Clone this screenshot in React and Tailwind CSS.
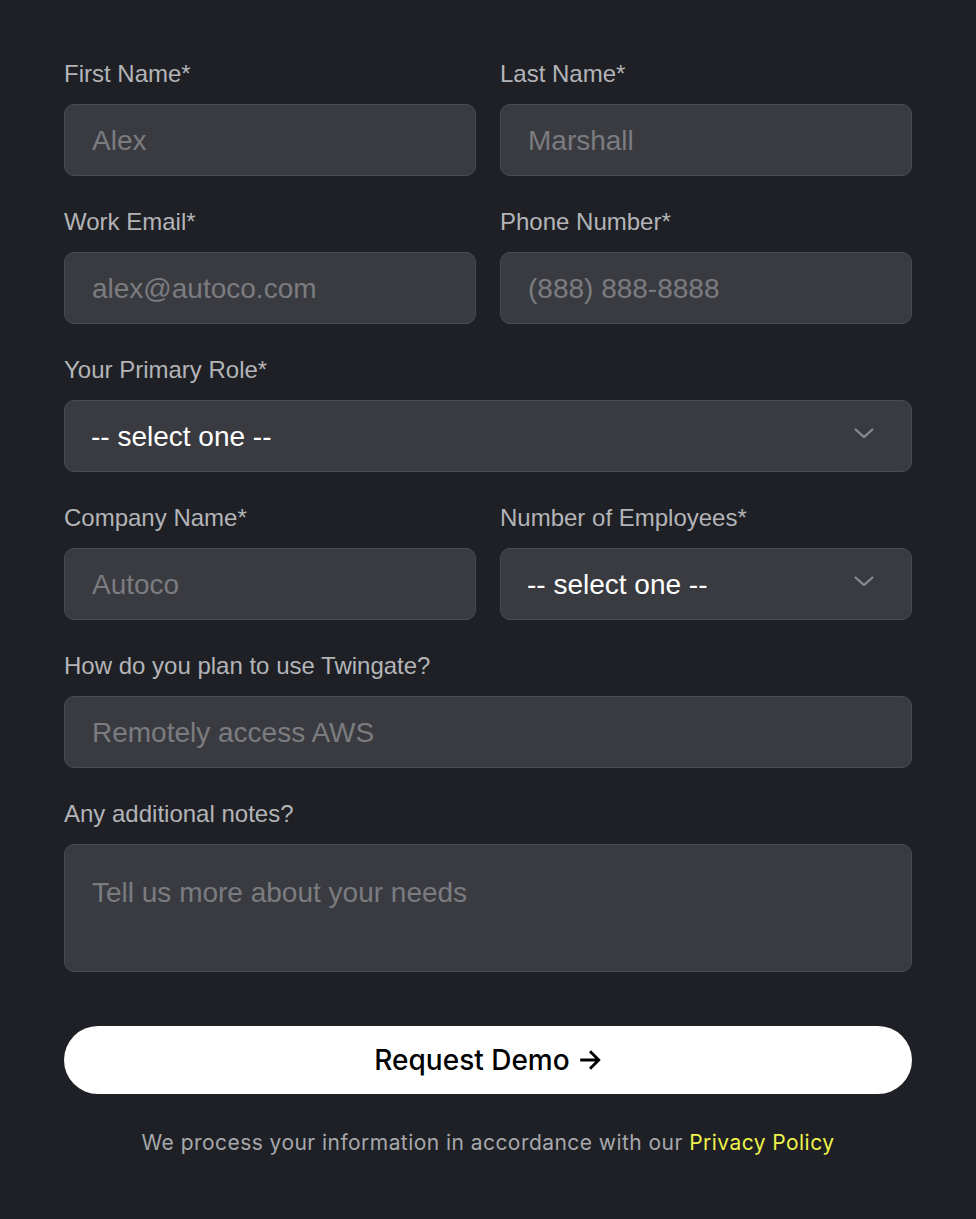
import React from "react";

const Label = ({ children }) => (
  <label className="block text-[24px] leading-[28px] text-[#b3b4b8] mb-4">{children}</label>
);

const Field = ({ label, placeholder }) => (
  <div className="flex flex-col">
    <Label>{label}</Label>
    <input
      placeholder={placeholder}
      className="h-[72px] w-full rounded-[10px] border border-[#4a4b51] bg-[#3a3b40] px-[27px] pt-[2px] text-[28px] text-white placeholder:text-[#7b7c80] outline-none"
    />
  </div>
);

const Select = ({ label }) => (
  <div className="flex flex-col">
    <Label>{label}</Label>
    <div className="relative">
      <select className="h-[72px] w-full appearance-none rounded-[10px] border border-[#4a4b51] bg-[#3a3b40] px-[26px] pt-[2px] text-[28px] text-white outline-none">
        <option>-- select one --</option>
      </select>
      <svg
        className="pointer-events-none absolute right-[37px] top-[26px]"
        width="22"
        height="14"
        viewBox="0 0 22 14"
        fill="none"
      >
        <path d="M2 3l9 8 9-8" stroke="#8a8b90" strokeWidth="2.2" />
      </svg>
    </div>
  </div>
);

const App = () => {
  return (
    <div className="min-h-[1219px] bg-[#1e2025] px-16 pt-[60px]" style={{ fontFamily: '"Liberation Sans", Arial, sans-serif' }}>
      <div className="flex flex-col gap-8">
        <div className="grid grid-cols-2 gap-6">
          <Field label="First Name*" placeholder="Alex" />
          <Field label="Last Name*" placeholder="Marshall" />
        </div>
        <div className="grid grid-cols-2 gap-6">
          <Field label="Work Email*" placeholder="alex@autoco.com" />
          <Field label="Phone Number*" placeholder="(888) 888-8888" />
        </div>
        <Select label="Your Primary Role*" />
        <div className="grid grid-cols-2 gap-6">
          <Field label="Company Name*" placeholder="Autoco" />
          <Select label="Number of Employees*" />
        </div>
        <Field label="How do you plan to use Twingate?" placeholder="Remotely access AWS" />
        <div className="flex flex-col">
          <Label>Any additional notes?</Label>
          <textarea
            placeholder="Tell us more about your needs"
            className="h-[128px] w-full resize-none rounded-[10px] border border-[#4a4b51] bg-[#3a3b40] px-[27px] pt-[32px] text-[28px] leading-[32px] text-white placeholder:text-[#7b7c80] outline-none"
          />
        </div>
      </div>

      <button
        className="mt-[54px] flex h-[68px] w-full items-center justify-center gap-2 rounded-full bg-white text-[28px] font-medium text-black"
        style={{ fontFamily: "Inter, sans-serif" }}
      >
        Request Demo
        <svg width="24" height="24" viewBox="0 0 22 22" fill="none">
          <path d="M2 11h17M11 3l8 8-8 8" stroke="black" strokeWidth="2.6" />
        </svg>
      </button>

      <p
        className="mt-[33px] text-center text-[21px] tracking-[0.45px] text-[#a7a8ac]"
        style={{ fontFamily: "Inter, sans-serif" }}
      >
        We process your information in accordance with our{" "}
        <a className="text-[#eef24a]">Privacy Policy</a>
      </p>
    </div>
  );
};

export default App;
